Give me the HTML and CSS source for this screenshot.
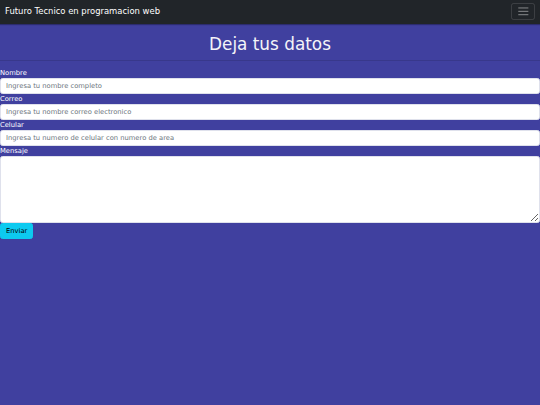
FILE: index.html
```html
<!DOCTYPE html>
<html lang="es">
<head>
<meta charset="utf-8">
<title>Futuro Tecnico</title>
<link rel="stylesheet" href="styles.css">
</head>
<body>
<nav class="navbar">
  <div class="nav-inner">
    <a class="brand" href="#">Futuro Tecnico en programacion web</a>
    <button class="toggler" type="button" aria-label="Menu">
      <svg class="toggler-icon" viewBox="0 0 30 30" xmlns="http://www.w3.org/2000/svg"><path d="M4 7h22M4 15h22M4 23h22" stroke="rgba(255,255,255,0.55)" stroke-width="2" stroke-linecap="round" fill="none"/></svg>
    </button>
  </div>
</nav>
<header class="hero">
  <h1 class="hero-title">Deja tus datos</h1>
</header>
<form class="form">
  <label class="label" for="nombre">Nombre</label>
  <input class="field" id="nombre" type="text" placeholder="Ingresa tu nombre completo">
  <label class="label" for="correo">Correo</label>
  <input class="field" id="correo" type="email" placeholder="Ingresa tu nombre correo electronico">
  <label class="label" for="celular">Celular</label>
  <input class="field" id="celular" type="text" placeholder="Ingresa tu numero de celular con numero de area">
  <label class="label" for="mensaje">Mensaje</label>
  <textarea class="field area" id="mensaje"></textarea>
  <button class="btn" type="submit">Enviar</button>
</form>
</body>
</html>
```
FILE: styles.css
```css
html, body {
  margin: 0;
  padding: 0;
}
body {
  background: #40409f;
  font-family: "DejaVu Sans", sans-serif;
  color: #fff;
  min-height: 405px;
}
.navbar {
  background: #212529;
  padding: 3.375px 0;
  box-shadow: 0 1px 1px rgba(0,0,0,0.3);
  position: relative;
}
.nav-inner {
  display: flex;
  align-items: center;
  justify-content: space-between;
  padding: 0 5.06px;
}
.brand {
  color: #fff;
  text-decoration: none;
  font-size: 8.44px;
  line-height: 12.66px;
  padding: 2.11px 0;
}
.toggler {
  width: 23.6px;
  height: 16.9px;
  padding: 0;
  background: transparent;
  border: 1px solid rgba(255,255,255,0.12);
  border-radius: 2.5px;
  display: flex;
  align-items: center;
  justify-content: center;
}
.toggler-icon {
  width: 12.66px;
  height: 12.66px;
  display: block;
}
.hero {
  padding: 10.4px 6.75px 6.2px;
  text-align: center;
  border-bottom: 1px solid rgba(0,0,0,0.12);
}
.hero-title {
  margin: 0;
  font-size: 16.875px;
  line-height: 1.2;
  font-weight: 500;
  color: #f4f4f8;
}
.form {
  display: flex;
  flex-direction: column;
  align-items: flex-start;
  margin-top: 6.4px;
}
.label {
  display: block;
  font-size: 6.75px;
  line-height: 10.125px;
  color: #fff;
}
.field {
  display: block;
  width: 100%;
  box-sizing: border-box;
  height: 16px;
  margin: 0;
  padding: 2.5px 5.06px;
  font-family: "DejaVu Sans", sans-serif;
  font-size: 6.75px;
  line-height: 1.5;
  color: #212529;
  background: #fff;
  border: 1px solid #dfe1ec;
  border-radius: 2.53px;
  outline: none;
}
.field::placeholder {
  color: #6c757d;
}
.area {
  height: 66.5px;
  resize: vertical;
}
.btn {
  height: 16.5px;
  padding: 0 5.06px;
  font-family: "DejaVu Sans", sans-serif;
  font-size: 6.75px;
  line-height: 1.5;
  color: #000;
  background: #0dcaf0;
  border: 1px solid #0dcaf0;
  border-radius: 2.53px;
}
```
